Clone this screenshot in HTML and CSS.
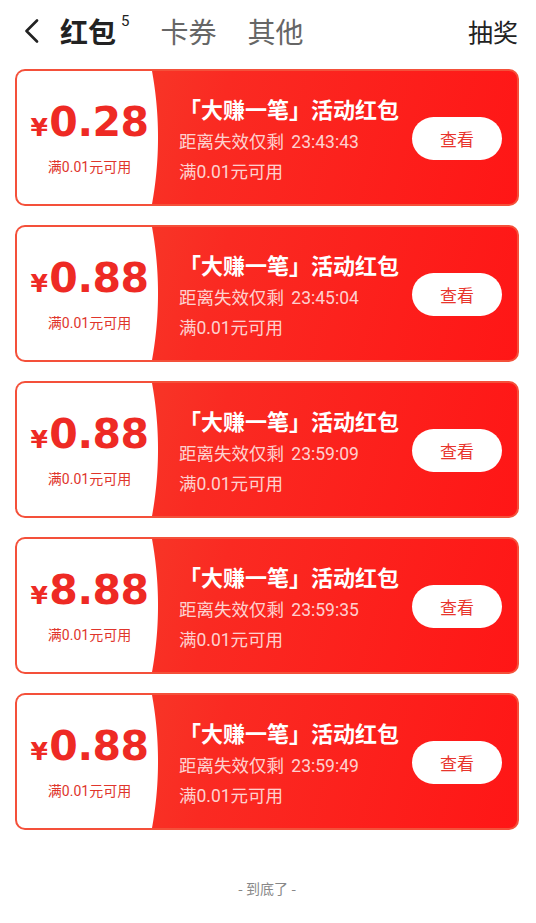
FILE: index.html
```html
<!DOCTYPE html>
<html>
    <head>
        <title>红包</title>
        <meta charset="utf-8">
        <link rel="stylesheet" href="styles.css">
    </head>
    <body>
    <div class="header">
        <svg class="back" width="16" height="24" viewBox="0 0 16 24">
            <path d="M13 1.5 L2.5 12 L13 22.5" fill="none" stroke="#222" stroke-width="2.6" stroke-linecap="round" stroke-linejoin="round"/>
        </svg>
        <div class="tabs">
            <span class="tab active">红包<sup class="count">5</sup></span>
            <span class="tab">卡券</span>
            <span class="tab">其他</span>
        </div>
        <span class="lottery">抽奖</span>
    </div>

    <div class="list">
        <div class="card">
            <div class="face">
                <div class="amount"><span class="yen">¥</span>0.28</div>
                <div class="limit">满0.01元可用</div>
            </div>
            <div class="info">
                <div class="text">
                    <div class="title">「大赚一笔」活动红包</div>
                    <div class="line expire">距离失效仅剩 23:43:43</div>
                    <div class="line">满0.01元可用</div>
                </div>
                <div class="btn">查看</div>
            </div>
        </div>
        <div class="card">
            <div class="face">
                <div class="amount"><span class="yen">¥</span>0.88</div>
                <div class="limit">满0.01元可用</div>
            </div>
            <div class="info">
                <div class="text">
                    <div class="title">「大赚一笔」活动红包</div>
                    <div class="line expire">距离失效仅剩 23:45:04</div>
                    <div class="line">满0.01元可用</div>
                </div>
                <div class="btn">查看</div>
            </div>
        </div>
        <div class="card">
            <div class="face">
                <div class="amount"><span class="yen">¥</span>0.88</div>
                <div class="limit">满0.01元可用</div>
            </div>
            <div class="info">
                <div class="text">
                    <div class="title">「大赚一笔」活动红包</div>
                    <div class="line expire">距离失效仅剩 23:59:09</div>
                    <div class="line">满0.01元可用</div>
                </div>
                <div class="btn">查看</div>
            </div>
        </div>
        <div class="card">
            <div class="face">
                <div class="amount"><span class="yen">¥</span>8.88</div>
                <div class="limit">满0.01元可用</div>
            </div>
            <div class="info">
                <div class="text">
                    <div class="title">「大赚一笔」活动红包</div>
                    <div class="line expire">距离失效仅剩 23:59:35</div>
                    <div class="line">满0.01元可用</div>
                </div>
                <div class="btn">查看</div>
            </div>
        </div>
        <div class="card">
            <div class="face">
                <div class="amount"><span class="yen">¥</span>0.88</div>
                <div class="limit">满0.01元可用</div>
            </div>
            <div class="info">
                <div class="text">
                    <div class="title">「大赚一笔」活动红包</div>
                    <div class="line expire">距离失效仅剩 23:59:49</div>
                    <div class="line">满0.01元可用</div>
                </div>
                <div class="btn">查看</div>
            </div>
        </div>
    </div>

    <div class="footer">- 到底了 -</div>
    </body>
</html>
```

FILE: styles.css
```css
body{
    margin: 0;
    background: #fff;
    font-family: "Roboto", "Noto Sans CJK SC", sans-serif;
}
.header{
    height: 62px;
    display: flex;
    align-items: center;
    padding: 0 18px 0 24px;
}
.back{
    display: block;
    margin-right: 20px;
}
.tabs{
    display: flex;
    align-items: center;
    gap: 31px;
    flex: 1;
}
.tab{
    font-family: "Noto Sans CJK SC", sans-serif;
    font-size: 28px;
    line-height: 36px;
    color: #666;
}
.tab.active{
    color: #222;
    font-weight: bold;
}
.count{
    font-family: "Roboto", sans-serif;
    font-size: 15px;
    font-weight: normal;
    vertical-align: top;
    line-height: 15px;
    margin-left: 5px;
    position: relative;
    top: 1px;
}
.lottery{
    font-family: "Noto Sans CJK SC", sans-serif;
    font-size: 25px;
    color: #222;
}
.list{
    padding: 7px 17px 0 15px;
    display: flex;
    flex-direction: column;
    gap: 19px;
}
.card{
    height: 133px;
    border: 2px solid #f4503a;
    border-radius: 10px;
    overflow: hidden;
    display: flex;
    background: linear-gradient(105deg, #f3472f 0%, #fa2a22 40%, #ff1616 100%);
}
.face{
    width: 125px;
    padding-left: 10px;
    background: #fff;
    display: flex;
    flex-direction: column;
    align-items: center;
    justify-content: center;
    white-space: nowrap;
}
.amount{
    font-family: "DejaVu Sans", sans-serif;
    font-weight: bold;
    font-size: 41px;
    line-height: 46px;
    color: #ee2a24;
    letter-spacing: -0.5px;
}
.yen{
    font-size: 25px;
    margin-right: 2px;
}
.limit{
    margin-top: 6px;
    font-size: 14px;
    line-height: 20px;
    color: #e0352c;
}
.info{
    flex: 1;
    display: flex;
    justify-content: space-between;
    padding: 0 15px 0 27px;
    background: radial-gradient(circle 371px at -365px 50%, #fff 370.5px, transparent 371.5px) no-repeat;
}
.text{
    padding-top: 22px;
    white-space: nowrap;
}
.title{
    font-family: "Noto Sans CJK SC", sans-serif;
    font-size: 22px;
    line-height: 30px;
    font-weight: bold;
    color: #fff;
    margin-bottom: 4px;
}
.line{
    font-size: 17.5px;
    line-height: 30px;
    color: rgba(255, 255, 255, 0.8);
}
.expire{
    word-spacing: 3px;
}
.btn{
    align-self: center;
    width: 90px;
    height: 43px;
    margin-top: 2px;
    border-radius: 22px;
    background: #fff;
    color: #e8352d;
    font-family: "Noto Sans CJK SC", sans-serif;
    font-size: 17px;
    line-height: 43px;
    text-align: center;
}
.footer{
    margin-top: 48px;
    text-align: center;
    font-family: "Noto Sans CJK SC", sans-serif;
    font-size: 14px;
    line-height: 20px;
    color: #888;
    padding-right: 2px;
}
```
